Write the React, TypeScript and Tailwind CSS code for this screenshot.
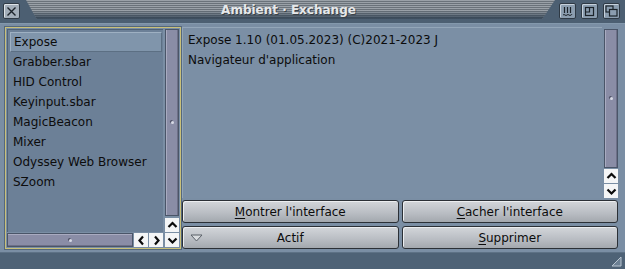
import type { ReactNode } from 'react'

const apps = ['Expose', 'Grabber.sbar', 'HID Control', 'Keyinput.sbar', 'MagicBeacon', 'Mixer', 'Odyssey Web Browser', 'SZoom']

export default function App() {
  return (
    <div className="w-[625px] h-[269px] flex flex-col overflow-hidden bg-[#7a8ea4] font-['DejaVu_Sans',sans-serif] text-[12px] text-[#0c0c0c] select-none">
      <TitleBar />
      <div className="flex flex-1 gap-[1px] pl-[5px] pr-[5px] pt-[3px] pb-[3px]">
        <AppList />
        <DetailPanel />
      </div>
      <div className="flex h-[17px] justify-end items-end border-t border-[#5d7185] bg-[#4e6276] pr-[3px] pb-[2px]">
        <svg width="11" height="11" viewBox="0 0 11 11">
          <path d="M10 1 L10 10 L1 10 Z" fill="#6c8094" stroke="#b8c4d0" strokeWidth="1" />
        </svg>
      </div>
    </div>
  )
}

function TitleBar() {
  return (
    <div className="relative flex h-[24px] items-start bg-[#4c5f72] border-b border-[#8398ac]">
      <div className="mt-[3px] ml-[3px] flex h-[16px] w-[17px] items-center justify-center rounded-[2px] border border-[#2f3a45] bg-[#a3aeb9] shadow-[inset_1px_1px_0_#dde3e8]">
        <svg width="11" height="11" viewBox="0 0 11 11">
          <path d="M1.5 1.5 L9.5 9.5 M9.5 1.5 L1.5 9.5" stroke="#1c232a" strokeWidth="1.4" />
        </svg>
      </div>
      <div className="ml-[6px] flex h-[19px] w-[529px] items-center justify-center bg-[linear-gradient(180deg,rgba(0,0,0,0)_55%,rgba(40,58,76,0.85)_100%),repeating-linear-gradient(180deg,#9aa1a8_0px,#9aa1a8_1px,#6a727a_1px,#6a727a_2px)] [clip-path:polygon(0_0,100%_0,97.6%_100%,2%_100%)]">
        <span className="font-['DejaVu_Sans',sans-serif] text-[12px] font-bold text-[#e6e8ea] [text-shadow:1px_1px_0_#3a4148] -ml-[4px]">Ambient · Exchange</span>
      </div>
      <div className="ml-[4px] mt-[3px] flex gap-[5px]">
        <Gadget>
          <svg width="11" height="11" viewBox="0 0 11 11">
            <path d="M2.5 1 V7 M5.5 1 V7 M8.5 1 V7" stroke="#1c232a" strokeWidth="1.2" />
            <path d="M1 9 Q2 8 3 9 T5 9 T7 9 T9 9 T10 9" stroke="#1c232a" fill="none" strokeWidth="1" />
          </svg>
        </Gadget>
        <Gadget>
          <svg width="11" height="11" viewBox="0 0 11 11">
            <rect x="1.5" y="1.5" width="8" height="8" fill="none" stroke="#1c232a" strokeWidth="1.2" />
            <path d="M1.5 6 H5.5 V1.5" fill="none" stroke="#1c232a" strokeWidth="1.2" />
          </svg>
        </Gadget>
        <Gadget>
          <svg width="13" height="12" viewBox="0 0 13 12">
            <rect x="1" y="1" width="7" height="6" fill="none" stroke="#1c232a" strokeWidth="1.2" />
            <rect x="4.5" y="4.5" width="7.5" height="6.5" fill="#8b9daf" stroke="#1c232a" strokeWidth="1.2" />
          </svg>
        </Gadget>
      </div>
    </div>
  )
}

function Gadget({ children }: { children: ReactNode }) {
  return (
    <div className="flex h-[16px] w-[17px] items-center justify-center rounded-[2px] border border-[#2e3944] bg-[#8b9daf] shadow-[inset_1px_1px_0_#c6d1dc]">
      {children}
    </div>
  )
}

function AppList() {
  return (
    <div className="w-[176px] border border-[#c9c079] p-[1px] shadow-[0_0_0_1px_#55687b]">
      <div className="grid h-full grid-cols-[1fr_14px] grid-rows-[1fr_14px] gap-x-[2px] gap-y-[1px]">
        <div className="border-t border-l border-[#4f6276] bg-[#6c8097] pt-[2px] pl-[2px] pr-[1px]">
          {apps.map((name, i) => (
            <div
              key={name}
              className={`flex h-[20px] items-center pl-[3px] ${i === 0 ? 'bg-[#8095ab] border-t border-l border-[#9eb0c2] border-b border-r border-b-[#5c6f83] border-r-[#5c6f83]' : ''}`}
            >
              {name}
            </div>
          ))}
        </div>
        <div className="flex flex-col gap-[2px]">
          <ScrollTrack vertical />
          <ArrowButton dir="up" />
        </div>
        <div className="flex gap-[1px]">
          <ScrollTrack />
          <ArrowButton dir="left" />
          <ArrowButton dir="right" />
        </div>
        <ArrowButton dir="down" />
      </div>
    </div>
  )
}

function DetailPanel() {
  return (
    <div className="flex flex-1 flex-col gap-[2px]">
      <div className="flex flex-1 gap-[2px] pr-[2px]">
        <div className="flex-1 border-t border-l border-[#93a6b9] bg-[#7b8fa5] pl-[5px] pt-[2px] leading-[20px]">
          <div>Expose 1.10 (01.05.2023) (C)2021-2023 J</div>
          <div>Navigateur d'application</div>
        </div>
        <div className="flex w-[14px] flex-col gap-[1px] pt-[2px]">
          <ScrollTrack vertical />
          <ArrowButton dir="up" />
          <ArrowButton dir="down" />
        </div>
      </div>
      <div className="grid grid-cols-2 gap-x-[3px] gap-y-[3px] pr-[2px]">
        <PushButton hot="M" rest="ontrer l'interface" />
        <PushButton hot="C" rest="acher l'interface" />
        <div className="relative flex h-[23px] items-center justify-center rounded-[3px] border border-[#2b3036] bg-[linear-gradient(180deg,#d3d6da_0%,#b8bcc2_60%,#a3a8ae_100%)] shadow-[inset_1px_1px_0_#eceef0]">
          <svg className="absolute left-[7px] top-[7px]" width="13" height="8" viewBox="0 0 13 8">
            <path d="M1 1 H12 L6.5 7 Z" fill="#d9dcdf" stroke="#5a6068" strokeWidth="1" />
          </svg>
          <span>Actif</span>
        </div>
        <PushButton hot="S" rest="upprimer" />
      </div>
    </div>
  )
}

function PushButton({ hot, rest }: { hot: string, rest: string }) {
  return (
    <div className="flex h-[23px] items-center justify-center rounded-[3px] border border-[#2b3036] bg-[linear-gradient(180deg,#d3d6da_0%,#b8bcc2_60%,#a3a8ae_100%)] shadow-[inset_1px_1px_0_#eceef0]">
      <span>
        <span className="underline underline-offset-[2px]">{hot}</span>
        {rest}
      </span>
    </div>
  )
}

function ScrollTrack({ vertical = false }: { vertical?: boolean }) {
  return (
    <div
      className={`flex flex-1 items-center justify-center border border-[#4a5568] bg-[#8a8da6] ${vertical ? 'shadow-[inset_1px_0_0_#a9abc0,inset_-1px_0_0_#6e7088]' : 'shadow-[inset_0_1px_0_#a9abc0,inset_0_-1px_0_#6e7088]'}`}
    >
      <div className="h-[3px] w-[3px] rounded-full bg-[#d8dae6] shadow-[-1px_-1px_0_#4e5166]" />
    </div>
  )
}

function ArrowButton({ dir }: { dir: 'up' | 'down' | 'left' | 'right' }) {
  const paths = {
    up: 'M2.5 8 L6.5 4 L10.5 8',
    down: 'M2.5 4.5 L6.5 8.5 L10.5 4.5',
    left: 'M8 2.5 L4.5 6.5 L8 10.5',
    right: 'M5 2.5 L8.5 6.5 L5 10.5',
  }
  return (
    <div className="flex h-[14px] w-[14px] shrink-0 items-center justify-center bg-[#f4f5f6]">
      <svg width="13" height="13" viewBox="0 0 13 13">
        <path d={paths[dir]} fill="none" stroke="#0b0b0b" strokeWidth="2.2" strokeLinejoin="miter" />
      </svg>
    </div>
  )
}
